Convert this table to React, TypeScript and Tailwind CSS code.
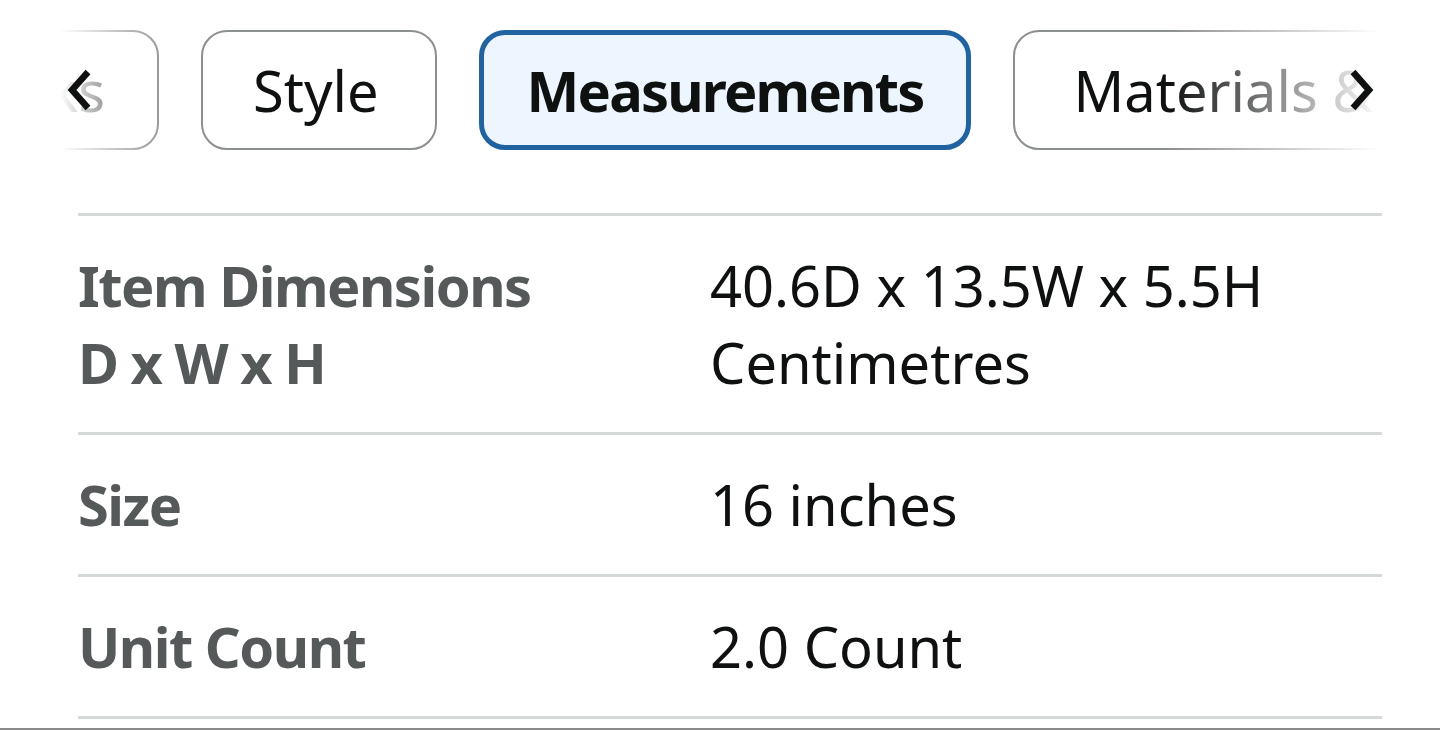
import React from 'react';

const font = { fontFamily: '"Noto Sans", "Open Sans", Arial, sans-serif' };

const rows = [
  { label: ['Item Dimensions', 'D x W x H'], value: ['40.6D x 13.5W x 5.5H', 'Centimetres'] },
  { label: ['Size'], value: ['16 inches'] },
  { label: ['Unit Count'], value: ['2.0 Count'] },
];

function Chevron({ dir }: { dir: 'left' | 'right' }) {
  return (
    <svg width="28" height="44" viewBox="0 0 28 44" fill="none">
      <path
        d={dir === 'left' ? 'M22 4 L6 22 L22 40' : 'M6 4 L22 22 L6 40'}
        stroke="#0f1111"
        strokeWidth="6.5"
        strokeLinecap="butt"
        strokeLinejoin="miter"
      />
    </svg>
  );
}

export default function App() {
  return (
    <div className="w-[1440px] h-[730px] bg-white overflow-hidden border-b-2 border-[#8a8a8a]" style={font}>
      {/* Tab strip */}
      <div className="relative h-[182px] overflow-hidden">
        <div className="flex items-start gap-[42px] pt-[30px] text-[56px] leading-[77px] text-[#0f1111] whitespace-nowrap">
          <div className="shrink-0 -ml-[101px] h-[120px] w-[260px] flex items-center justify-end pr-[52px] rounded-[26px] border-2 border-[#8d9090] bg-white">
            Looks
          </div>
          <div className="shrink-0 h-[120px] pl-[50px] pr-[56px] flex items-center rounded-[26px] border-2 border-[#8d9090] bg-white">
            Style
          </div>
          <div className="shrink-0 h-[120px] px-[43px] flex items-center rounded-[26px] border-[5px] border-[#2162a1] bg-[#edf6ff] font-bold tracking-[-1.8px]">
            Measurements
          </div>
          <div className="shrink-0 h-[120px] px-[58px] flex items-center rounded-[26px] border-2 border-[#8d9090] bg-white">
            Materials &amp; Care
          </div>
        </div>

        {/* edge fades */}
        <div className="absolute left-0 top-0 h-full w-[170px] bg-gradient-to-r from-white from-35% to-white/0" />
        <div className="absolute right-0 top-0 h-full w-[270px] bg-gradient-to-l from-white from-22% to-white/0" />
        <div className="absolute left-[66px] top-[68px]">
          <Chevron dir="left" />
        </div>
        <div className="absolute left-[1347px] top-[68px]">
          <Chevron dir="right" />
        </div>
      </div>

      {/* Measurements table */}
      <div className="ml-[78px] mr-[58px] border-t-[3px] border-[#d5d9d9] mt-[31px]">
        {rows.map((row) => (
          <div
            key={row.label[0]}
            className="flex py-[31px] border-b-[3px] border-[#d5d9d9] text-[56px] leading-[77px]"
          >
            <div className="w-[632px] shrink-0 font-bold text-[#565959] tracking-[-1.5px]">
              {row.label.map((l) => (
                <div key={l}>{l}</div>
              ))}
            </div>
            <div className="text-[#0f1111]">
              {row.value.map((v) => (
                <div key={v}>{v}</div>
              ))}
            </div>
          </div>
        ))}
      </div>
    </div>
  );
}
